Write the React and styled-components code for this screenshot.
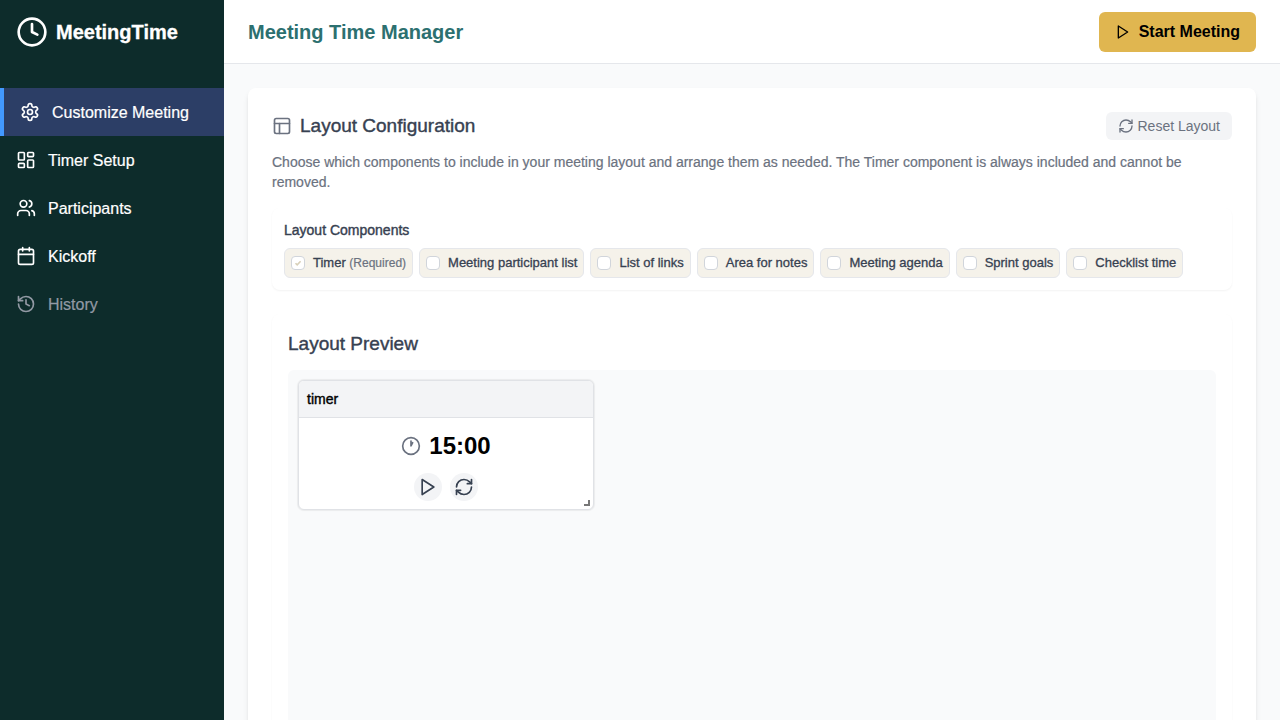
import React from "react";
import styled, { createGlobalStyle, css } from "styled-components";
import { Clock, Clock1, LayoutDashboard, Users, Calendar, History, RefreshCw, PanelsTopLeft } from "lucide-react";

const GlobalStyle = createGlobalStyle`
  *, *::before, *::after { box-sizing: border-box; }
  body {
    margin: 0;
    font-family: "Liberation Sans", Arial, sans-serif;
    font-size: 16px;
    line-height: 24px;
    color: #000;
    background: #f9fafb;
  }
  h1, h2, h3, p { margin: 0; }
  button { font: inherit; border: 0; cursor: pointer; }
`;

const medium = css`
  -webkit-text-stroke: 0.4px currentColor;
`;

const Shell = styled.div`
  display: flex;
  height: 100vh;
  overflow: hidden;
`;

const Sidebar = styled.aside`
  flex: none;
  width: 224px;
  background: #0d2c2b;
  color: #fff;
`;

const Brand = styled.div`
  display: flex;
  align-items: center;
  gap: 8px;
  height: 64px;
  padding: 0 16px;
  font-size: 20px;
  font-weight: 700;
  -webkit-text-stroke: 0.3px currentColor;
`;

const Nav = styled.nav`
  display: flex;
  flex-direction: column;
  padding-top: 24px;
`;

const NavLink = styled.a`
  display: flex;
  align-items: center;
  gap: 12px;
  height: 48px;
  padding: 0 16px;
  text-decoration: none;
  color: ${(p) => (p.$muted ? "#9299a4" : "#fff")};
  -webkit-text-stroke: 0.2px currentColor;
  ${(p) => p.$active && css`
    background: #2c3e66;
    border-left: 4px solid #4299ff;
  `}
`;

const NavText = styled.span`
  padding-top: 2px;
`;

const Main = styled.main`
  flex: 1;
  min-width: 0;
  display: flex;
  flex-direction: column;
`;

const TopBar = styled.header`
  flex: none;
  display: flex;
  align-items: center;
  justify-content: space-between;
  height: 64px;
  padding: 0 24px;
  background: #fff;
  border-bottom: 1px solid #e5e7eb;
`;

const PageTitle = styled.h1`
  font-size: 20px;
  line-height: 28px;
  font-weight: 700;
  color: #2c7070;
`;

const StartButton = styled.button`
  display: flex;
  align-items: center;
  gap: 8px;
  height: 40px;
  padding: 0 16px;
  border-radius: 6px;
  background: #e0b650;
  color: #000;
  font-weight: 700;
`;

const Content = styled.div`
  flex: 1;
  min-height: 0;
  overflow: hidden;
  padding: 24px;
`;

const Card = styled.section`
  min-height: 800px;
  padding: 24px;
  border-radius: 8px;
  background: #fff;
  box-shadow: 0 4px 6px -1px rgba(0, 0, 0, 0.1), 0 2px 4px -2px rgba(0, 0, 0, 0.1);
`;

const CardHeader = styled.div`
  display: flex;
  align-items: center;
  justify-content: space-between;
  height: 28px;
`;

const Title = styled.h2`
  display: flex;
  align-items: center;
  gap: 8px;
  font-size: 19px;
  line-height: 28px;
  font-weight: 400;
  color: #374151;
  ${medium}
  svg { color: #6b7280; }
`;

const ResetButton = styled.button`
  display: flex;
  align-items: center;
  gap: 4px;
  height: 28px;
  padding: 0 12px;
  border-radius: 6px;
  background: #f3f4f6;
  color: #6b7280;
  font-size: 14px;
`;

const Description = styled.p`
  margin-top: 12px;
  font-size: 14px;
  line-height: 20px;
  color: #6b7280;
  -webkit-text-stroke: 0.2px currentColor;
`;

const Panel = styled.section`
  margin-top: ${(p) => p.$gap}px;
  padding: ${(p) => p.$pad}px;
  border-radius: 8px;
  background: #fff;
  box-shadow: 0 1px 2px rgba(0, 0, 0, 0.05);
`;

const OptionGroup = styled.fieldset`
  margin: 0;
  padding: 0;
  border: 0;
  min-width: 0;
`;

const Legend = styled.legend`
  padding: 0;
  margin-bottom: 8px;
  font-size: 14px;
  line-height: 20px;
  color: #374151;
  ${medium}
`;

const Options = styled.div`
  display: flex;
  flex-wrap: wrap;
  gap: 6px;
`;

const Option = styled.label`
  display: flex;
  align-items: center;
  gap: 8px;
  height: 30px;
  padding: 0 6px;
  border: 1px solid #e5e7eb;
  border-radius: 6px;
  background: #f5f2ea;
  font-size: 13px;
  line-height: 16px;
  color: #374151;
  -webkit-text-stroke: 0.3px currentColor;
`;

const Note = styled.span`
  font-size: 12px;
  color: #6b7280;
  -webkit-text-stroke: 0.2px currentColor;
`;

const Checkbox = styled.input`
  appearance: none;
  flex: none;
  width: 14px;
  height: 14px;
  margin: 0;
  border: 1px solid #d1d5db;
  border-radius: 4px;
  background: #fff;
  &:checked {
    background: #fff url("data:image/svg+xml,%3Csvg xmlns='http://www.w3.org/2000/svg' viewBox='0 0 12 12' fill='none' stroke='%23d8d0b8' stroke-width='1.6'%3E%3Cpath d='M3.5 6.2l1.7 1.7 3.4-3.6'/%3E%3C/svg%3E") center / 12px no-repeat;
  }
`;

const Canvas = styled.div`
  min-height: 480px;
  margin-top: 12px;
  padding: 10px;
  border-radius: 6px;
  background: #f9fafb;
`;

const Widget = styled.article`
  position: relative;
  width: 296px;
  border: 1px solid #e0e2e6;
  border-radius: 6px;
  background: #fff;
  overflow: hidden;
  box-shadow: 0 0 1px 1px rgba(0, 0, 0, 0.06);
`;

const WidgetTitle = styled.h3`
  padding: 8px;
  border-bottom: 1px solid #e0e2e6;
  background: #f3f4f6;
  font-size: 14px;
  line-height: 20px;
  font-weight: 400;
  ${medium}
`;

const WidgetBody = styled.div`
  display: flex;
  flex-direction: column;
  align-items: center;
  gap: 11px;
  padding: 12px 8px 8px;
`;

const Time = styled.div`
  display: flex;
  align-items: center;
  gap: 8px;
  font-size: 24px;
  line-height: 32px;
  font-weight: 700;
  svg { color: #6b7280; }
`;

const Controls = styled.div`
  display: flex;
  gap: 8px;
`;

const RoundButton = styled.button`
  display: grid;
  place-items: center;
  width: 28px;
  height: 28px;
  padding: 0;
  border-radius: 50%;
  background: #f3f4f6;
  color: #374151;
`;

const ResizeHandle = styled.span`
  position: absolute;
  right: 3px;
  bottom: 3px;
  width: 6px;
  height: 6px;
  border-right: 2px solid #777;
  border-bottom: 2px solid #777;
`;

const StrokeIcon = ({ size, children }) => (
  <svg width={size} height={size} viewBox="0 0 24 24" fill="none" stroke="currentColor" strokeWidth="2" strokeLinecap="round" strokeLinejoin="round" aria-hidden="true">
    {children}
  </svg>
);

const PlayIcon = ({ size }) => (
  <StrokeIcon size={size}><polygon points="5 3 19 12 5 21 5 3" /></StrokeIcon>
);

const GearIcon = ({ size }) => (
  <StrokeIcon size={size}>
    <path d="M12.22 2h-.44a2 2 0 0 0-2 2v.18a2 2 0 0 1-1 1.73l-.43.25a2 2 0 0 1-2 0l-.15-.08a2 2 0 0 0-2.73.73l-.22.38a2 2 0 0 0 .73 2.73l.15.1a2 2 0 0 1 1 1.72v.51a2 2 0 0 1-1 1.74l-.15.09a2 2 0 0 0-.73 2.73l.22.38a2 2 0 0 0 2.73.73l.15-.08a2 2 0 0 1 2 0l.43.25a2 2 0 0 1 1 1.73V20a2 2 0 0 0 2 2h.44a2 2 0 0 0 2-2v-.18a2 2 0 0 1 1-1.73l.43-.25a2 2 0 0 1 2 0l.15.08a2 2 0 0 0 2.73-.73l.22-.39a2 2 0 0 0-.73-2.73l-.15-.08a2 2 0 0 1-1-1.74v-.5a2 2 0 0 1 1-1.74l.15-.09a2 2 0 0 0 .73-2.73l-.22-.38a2 2 0 0 0-2.73-.73l-.15.08a2 2 0 0 1-2 0l-.43-.25a2 2 0 0 1-1-1.73V4a2 2 0 0 0-2-2z" />
    <circle cx="12" cy="12" r="3" />
  </StrokeIcon>
);

const links = [
  { text: "Customize Meeting", icon: GearIcon, active: true },
  { text: "Timer Setup", icon: LayoutDashboard },
  { text: "Participants", icon: Users },
  { text: "Kickoff", icon: Calendar },
  { text: "History", icon: History, muted: true },
];

const options = ["Meeting participant list", "List of links", "Area for notes", "Meeting agenda", "Sprint goals", "Checklist time"];

export default function App() {
  return (
    <Shell>
      <GlobalStyle />
      <Sidebar>
        <Brand><Clock size={32} />MeetingTime</Brand>
        <Nav>
          {links.map(({ text, icon: Icon, active, muted }) => (
            <NavLink key={text} href="#" $active={active} $muted={muted}>
              <Icon size={20} /><NavText>{text}</NavText>
            </NavLink>
          ))}
        </Nav>
      </Sidebar>
      <Main>
        <TopBar>
          <PageTitle>Meeting Time Manager</PageTitle>
          <StartButton type="button"><PlayIcon size={16} />Start Meeting</StartButton>
        </TopBar>
        <Content>
          <Card>
            <CardHeader>
              <Title><PanelsTopLeft size={20} />Layout Configuration</Title>
              <ResetButton type="button"><RefreshCw size={16} />Reset Layout</ResetButton>
            </CardHeader>
            <Description>
              Choose which components to include in your meeting layout and arrange them as needed. The Timer component is always included and cannot be removed.
            </Description>
            <Panel $gap={16} $pad={12}>
              <OptionGroup>
                <Legend>Layout Components</Legend>
                <Options>
                  <Option><Checkbox type="checkbox" checked disabled readOnly /><span>Timer <Note>(Required)</Note></span></Option>
                  {options.map((name) => (
                    <Option key={name}><Checkbox type="checkbox" />{name}</Option>
                  ))}
                </Options>
              </OptionGroup>
            </Panel>
            <Panel $gap={24} $pad={16}>
              <Title>Layout Preview</Title>
              <Canvas>
                <Widget>
                  <WidgetTitle>timer</WidgetTitle>
                  <WidgetBody>
                    <Time><Clock1 size={20} />15:00</Time>
                    <Controls>
                      <RoundButton type="button" aria-label="Start timer"><PlayIcon size={20} /></RoundButton>
                      <RoundButton type="button" aria-label="Reset timer"><RefreshCw size={20} /></RoundButton>
                    </Controls>
                  </WidgetBody>
                  <ResizeHandle />
                </Widget>
              </Canvas>
            </Panel>
          </Card>
        </Content>
      </Main>
    </Shell>
  );
}
